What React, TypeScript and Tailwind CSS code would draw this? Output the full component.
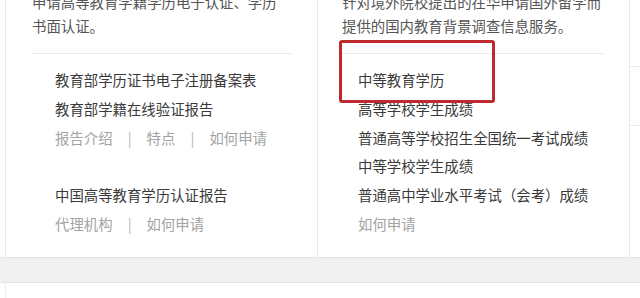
const font = { fontFamily: '"Noto Sans CJK SC", "Noto Sans", sans-serif' };

const Sep = () => (
  <span className="inline-block w-[34px] text-center text-[#b5b5b5]">|</span>
);

const Links = ({ items }: { items: string[] }) => (
  <div className="h-[28.8px] leading-[28.8px] text-[#a3a3a3]">
    {items.map((t, i) => (
      <span key={t}>
        {i > 0 && <Sep />}
        {t}
      </span>
    ))}
  </div>
);

const Row = ({ children }: { children: React.ReactNode }) => (
  <div className="h-[28.8px] leading-[28.8px] text-[#3a3a3a]">{children}</div>
);

export default function App() {
  return (
    <div
      className="w-[640px] h-[298px] bg-white overflow-hidden text-[14.4px]"
      style={font}
    >
      <div className="flex h-[257px] pl-[5px]">
        {/* left panel */}
        <div className="w-[313px] h-full border-l border-r border-[#e6e6e6] flex flex-col">
          <div className="mt-[-10px] px-[26px] text-[#555] leading-[24px]">
            <p className="whitespace-nowrap">申请高等教育学籍学历电子认证、学历</p>
            <p>书面认证。</p>
          </div>
          <div className="mx-[25px] mt-[15px] border-t border-[#ececec]" />
          <div className="pl-[49px] pt-[12px]">
            <Row>教育部学历证书电子注册备案表</Row>
            <Row>教育部学籍在线验证报告</Row>
            <Links items={["报告介绍", "特点", "如何申请"]} />
            <div className="h-[28.8px]" />
            <Row>中国高等教育学历认证报告</Row>
            <Links items={["代理机构", "如何申请"]} />
          </div>
        </div>

        {/* right panel */}
        <div className="relative w-[312px] h-full border-r border-[#e6e6e6] flex flex-col">
          <div className="mt-[-10px] px-[24px] text-[#555] leading-[24px]">
            <p className="whitespace-nowrap">针对境外院校提出的在华申请国外留学而</p>
            <p>提供的国内教育背景调查信息服务。</p>
          </div>
          <div className="mx-[24px] mt-[15px] border-t border-[#ececec]" />
          <div className="pl-[40px] pt-[12px]">
            <Row>中等教育学历</Row>
            <Row>高等学校学生成绩</Row>
            <Row>普通高等学校招生全国统一考试成绩</Row>
            <Row>中等学校学生成绩</Row>
            <Row>普通高中学业水平考试（会考）成绩</Row>
            <Links items={["如何申请"]} />
          </div>
          <div className="absolute left-[21px] top-[40px] w-[156px] h-[63px] border-[3px] border-[#bf2a2f] rounded-[3px]" />
        </div>

        {/* right strip */}
        <div className="flex-1 flex flex-col">
          <div className="h-[67px] border-b border-[#ececec]" />
          <div className="h-[59px] border-b border-[#ececec]" />
        </div>
      </div>
      <div className="h-[26px] bg-[#f1f1f1] border-t border-b border-[#e4e4e4]" />
      <div className="h-[15px] ml-[5px] border-l border-[#eeeeee]" />
    </div>
  );
}
